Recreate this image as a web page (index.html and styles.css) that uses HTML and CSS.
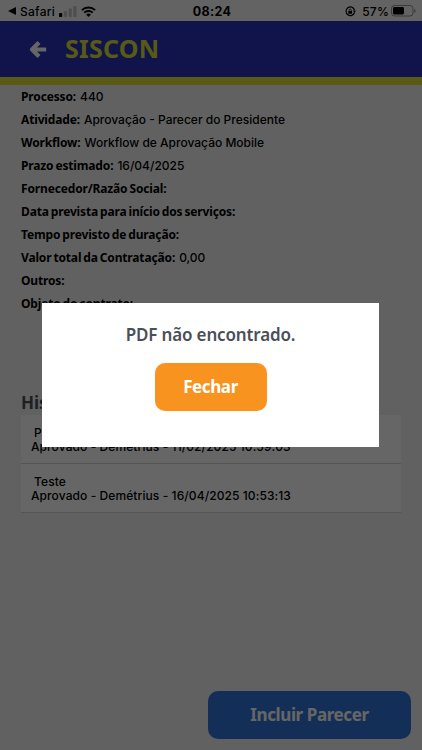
FILE: index.html
```html
<!DOCTYPE html>
<html lang="pt-BR">
<head>
  <meta charset="UTF-8" />
  <meta name="viewport" content="width=device-width, initial-scale=1.0"/>
  <title>SISCON</title>
  <link rel="stylesheet" href="styles.css">
</head>
<body>
  <div class="app">
    <!-- Status bar -->
    <div class="status">
      <div class="status-left">
        <svg width="9" height="8" viewBox="0 0 9 8"><path d="M0 4 8 0v8z"/></svg>
        <span class="safari">Safari</span>
        <svg class="signal" width="18" height="11" viewBox="0 0 18 11">
          <rect x="0" y="7" width="3.2" height="4" rx=".8"/>
          <g opacity=".2">
            <rect x="4.8" y="5" width="3.2" height="6" rx=".8"/>
            <rect x="9.6" y="2.5" width="3.2" height="8.5" rx=".8"/>
            <rect x="14.3" y="0" width="3.2" height="11" rx=".8"/>
          </g>
        </svg>
        <svg class="wifi" width="15" height="11" viewBox="0 0 15 11">
          <path d="M.9 4.1a9.5 9.5 0 0 1 13.2 0M3.3 6.6a6 6 0 0 1 8.4 0" fill="none" stroke="#000" stroke-width="2"/>
          <path d="M5.1 8.6a3.5 3.5 0 0 1 4.8 0L7.5 11z"/>
        </svg>
      </div>
      <div class="clock">08:24</div>
      <div class="status-right">
        <svg width="11" height="11" viewBox="0 0 11 11">
          <path d="M9.5 6.5A4.3 4.3 0 1 1 9.5 4" fill="none" stroke="#000" stroke-width="1.2"/>
          <path d="M7.8 4.5H11L9.6 6.8z"/>
          <rect x="3.3" y="4.9" width="3.8" height="2.9" rx=".4"/>
          <path d="M4.1 5V4.2a1.1 1.1 0 0 1 2.2 0V5" fill="none" stroke="#000" stroke-width=".7"/>
        </svg>
        <span class="percent">57%</span>
        <svg width="25" height="12" viewBox="0 0 25 12">
          <rect x=".5" y=".5" width="21.5" height="10.5" rx="3" fill="none" stroke="#000" stroke-opacity=".4"/>
          <rect x="2" y="2" width="11" height="7.5" rx="1.4"/>
          <path d="M23.3 4v3.8q1.3-.5 1.3-1.9T23.3 4z" opacity=".45"/>
        </svg>
      </div>
    </div>

    <div class="header">
      <svg class="back" width="18" height="19" viewBox="0 0 18 19">
        <path d="M10 2.5 3 9.5l7 7M3.5 9.5h13.7" fill="none" stroke="#fff" stroke-width="4.2" stroke-linejoin="round"/>
      </svg>
      <h1>SISCON</h1>
    </div>

    <div class="content">
      <div class="fields">
        <div class="field"><b>Processo:</b><span>440</span></div>
        <div class="field"><b>Atividade:</b><span>Aprovação - Parecer do Presidente</span></div>
        <div class="field"><b>Workflow:</b><span>Workflow de Aprovação Mobile</span></div>
        <div class="field"><b>Prazo estimado:</b><span>16/04/2025</span></div>
        <div class="field"><b>Fornecedor/Razão Social:</b></div>
        <div class="field"><b>Data prevista para início dos serviços:</b></div>
        <div class="field"><b>Tempo previsto de duração:</b></div>
        <div class="field"><b>Valor total da Contratação:</b><span>0,00</span></div>
        <div class="field"><b>Outros:</b></div>
        <div class="field"><b>Objeto do contrato:</b></div>
      </div>

      <h2>Histórico</h2>
      <div class="history">
        <div class="entry">
          <div class="entry-title">Parecer</div>
          <div>Aprovado - Demétrius - 11/02/2025 10:59:03</div>
        </div>
        <div class="entry">
          <div class="entry-title">Teste</div>
          <div>Aprovado - Demétrius - 16/04/2025 10:53:13</div>
        </div>
      </div>
    </div>

    <div class="footer">
      <button class="btn btn-primary">Incluir Parecer</button>
    </div>
  </div>

  <!-- Modal -->
  <div class="overlay">
    <div class="modal">
      <p class="message">PDF não encontrado.</p>
      <button class="btn btn-close">Fechar</button>
    </div>
  </div>
</body>
</html>
```
FILE: styles.css
```css
* {
  box-sizing: border-box;
}

body {
  margin: 0;
  font-family: "Noto Sans", sans-serif;
  color: #000;
}

.app {
  display: flex;
  flex-direction: column;
  height: 750px;
  overflow: hidden;
  background: #f3f3f3;
}

/* Status bar */
.status {
  display: grid;
  grid-template-columns: 1fr auto 1fr;
  align-items: center;
  height: 21px;
  padding: 1px 6px 0 8px;
  background: #f7f7f7;
  font-family: Inter, sans-serif;
  font-size: 12px;
}
.status-left,
.status-right {
  display: flex;
  align-items: center;
}
.status-right {
  justify-content: flex-end;
}
.safari {
  margin-left: 3px;
  font-weight: 500;
  letter-spacing: 0.25px;
}
.signal {
  margin-left: 4px;
}
.wifi {
  margin-left: 4px;
}
.clock {
  font-weight: 700;
  font-size: 12.5px;
  letter-spacing: 0.3px;
}
.percent {
  margin: 0 2px 0 6px;
  font-weight: 500;
  letter-spacing: 0.2px;
}

/* Header */
.header {
  display: flex;
  align-items: center;
  height: 64px;
  padding-left: 29px;
  background: #2a34b9;
  border-bottom: 8px solid #dee032;
}
.header h1 {
  margin: -2px 0 0 18px;
  color: #dee032;
  font-size: 25px;
  line-height: 30px;
  font-weight: 700;
  letter-spacing: 0.25px;
}
.back {
  margin-top: 1px;
}

.content {
  flex: 1;
  padding: 0 21px;
}
.field {
  display: flex;
  height: 23px;
  font-size: 12px;
  line-height: 23px;
  white-space: nowrap;
}
.field b {
  font-weight: 700;
  letter-spacing: -0.15px;
  word-spacing: -1px;
  margin-right: -1px;
}
.field span {
  margin-left: 5px;
  font-family: Inter, sans-serif;
  font-weight: 500;
  letter-spacing: 0;
}

.content h2 {
  margin: 76px 0 0;
  color: #4a4f57;
  font-size: 17px;
  line-height: 24px;
}
.history {
  background: #fff;
  font-family: Inter, sans-serif;
  font-size: 12px;
  font-weight: 500;
  letter-spacing: 0.09px;
  line-height: 14px;
}
.entry {
  height: 49px;
  padding: 11px 10px 0;
  border-bottom: 1px solid #d4d4d4;
}
.entry-title {
  padding-left: 3px;
}

.footer {
  display: flex;
  justify-content: flex-end;
  padding: 0 11px 11px;
}

.btn {
  height: 48px;
  padding: 0 0 2px;
  border: 0;
  border-radius: 10px;
  color: #fff;
  font-family: "Noto Sans", sans-serif;
  font-size: 17px;
  font-weight: 700;
  letter-spacing: -0.4px;
}
.btn-primary {
  width: 203px;
  background: #3276da;
}
.btn-close {
  width: 112px;
  background: #f7931e;
}

/* Modal sits above the whole page */
.overlay {
  position: fixed;
  inset: 0;
  display: flex;
  align-items: center;
  justify-content: center;
  padding-right: 1px;
  background: rgba(0, 0, 0, 0.6);
}
.modal {
  width: 337px;
  height: 144px;
  padding-top: 20px;
  background: #fff;
  text-align: center;
}
.message {
  margin: 0 0 16px;
  color: #4a4f57;
  font-size: 17px;
  line-height: 24px;
  font-weight: 600;
  letter-spacing: -0.15px;
}
```
